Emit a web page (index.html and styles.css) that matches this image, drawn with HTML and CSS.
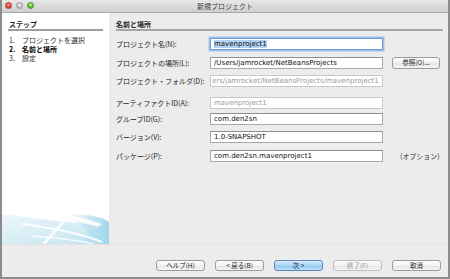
FILE: index.html
```html
<!DOCTYPE html>
<html lang="ja">
<head>
<meta charset="utf-8">
<title>新規プロジェクト</title>
<link rel="stylesheet" href="styles.css">
</head>
<body>
<div class="window">
  <div class="titlebar">
    <div class="lights">
      <span class="light red"></span>
      <span class="light yellow"></span>
      <span class="light green"></span>
    </div>
    <div class="title">新規プロジェクト</div>
  </div>
  <div class="main">
    <div class="steps">
      <div class="steps-head">ステップ</div>
      <ol class="step-list">
        <li><span class="num">1.</span><span>プロジェクトを選択</span></li>
        <li class="current"><span class="num">2.</span><span>名前と場所</span></li>
        <li><span class="num">3.</span><span>設定</span></li>
      </ol>
      <svg class="swoosh" width="107" height="50" viewBox="0 0 107 50">
        <defs>
          <linearGradient id="g1" x1="0" y1="0" x2="1" y2="0">
            <stop offset="0" stop-color="#d4ecf5" stop-opacity="0.1"/>
            <stop offset="1" stop-color="#9fd6ea"/>
          </linearGradient>
          <linearGradient id="g2" x1="0" y1="0" x2="1" y2="1">
            <stop offset="0" stop-color="#e8f5fa"/>
            <stop offset="1" stop-color="#b2ddec"/>
          </linearGradient>
        </defs>
        <path d="M0 20 C30 24 60 28 107 32 L107 50 L0 50 Z" fill="url(#g2)" opacity="0.8"/>
        <path d="M55 22 C80 18 100 22 107 28 L107 50 L75 50 C90 40 90 30 55 22 Z" fill="url(#g1)"/>
        <path d="M6 2 L100 30 L96 33 L4 6 Z" fill="#ffffff" opacity="0.85"/>
        <path d="M84 0 L86 1 L44 50 L40 50 Z" fill="#ffffff" opacity="0.85"/>
        <path d="M20 30 C50 34 80 40 100 48" stroke="#ffffff" stroke-width="2" fill="none" opacity="0.9"/>
        <path d="M30 42 C55 44 75 46 92 50" stroke="#ffffff" stroke-width="1.5" fill="none" opacity="0.9"/>
      </svg>
    </div>
    <div class="content">
      <div class="content-head">名前と場所</div>
      <div class="form">
        <label class="lbl">プロジェクト名(N):</label>
        <div class="field focus"><span class="sel">mavenproject1</span></div>
        <div></div>

        <label class="lbl">プロジェクトの場所(L):</label>
        <div class="field">/Users/jamrocket/NetBeansProjects</div>
        <button class="btn browse">参照(O)...</button>

        <label class="lbl">プロジェクト・フォルダ(D):</label>
        <div class="field disabled clip"><span>ers/jamrocket/NetBeansProjects/mavenproject1</span></div>
        <div></div>

        <label class="lbl gap">アーティファクトID(A):</label>
        <div class="field disabled gap">mavenproject1</div>
        <div class="gap"></div>

        <label class="lbl">グループID(G):</label>
        <div class="field">com.den2sn</div>
        <div></div>

        <label class="lbl">バージョン(V):</label>
        <div class="field">1.0-SNAPSHOT</div>
        <div></div>

        <label class="lbl">パッケージ(P):</label>
        <div class="field">com.den2sn.mavenproject1</div>
        <div class="note">(オプション)</div>
      </div>
    </div>
  </div>
  <div class="footer">
    <button class="btn">ヘルプ(H)</button>
    <button class="btn">&lt; 戻る(B)</button>
    <button class="btn primary">次 &gt;</button>
    <button class="btn inactive">終了(F)</button>
    <button class="btn">取消</button>
  </div>
</div>
</body>
</html>
```

FILE: styles.css
```css
html, body {
  margin: 0;
  padding: 0;
  background: #ececec;
}
body {
  font-family: "Noto Sans CJK JP", "Noto Sans", sans-serif;
  font-size: 7px;
  color: #222;
}
.window {
  width: 450px;
  height: 279px;
  box-sizing: border-box;
  border-left: 2px solid #8c8c8c;
  border-right: 2px solid #8c8c8c;
  border-bottom: 2px solid #8c8c8c;
  background: #ececec;
  display: flex;
  flex-direction: column;
}
.titlebar {
  height: 12px;
  flex: none;
  position: relative;
  background: linear-gradient(#e8e8e8, #cfcfcf);
  border-bottom: 1px solid #a8a8a8;
  display: flex;
  align-items: center;
  justify-content: center;
}
.lights {
  position: absolute;
  left: 3px;
  top: 2px;
  display: flex;
  gap: 4px;
}
.light {
  width: 7px;
  height: 7px;
  border-radius: 50%;
  box-sizing: border-box;
}
.red { background: radial-gradient(circle at 50% 35%, #ff9a8a, #d8372b 70%); border: 1px solid #b23a30; }
.yellow { background: radial-gradient(circle at 50% 35%, #f4f4f4, #b9b9b9 70%); border: 1px solid #9a9a9a; }
.green { background: radial-gradient(circle at 50% 35%, #bff19d, #4fb52c 70%); border: 1px solid #3c8f25; }
.title {
  font-size: 7px;
  color: #3a3a3a;
  line-height: 12px;
}
.main {
  flex: none;
  height: 231px;
  display: flex;
}
.steps {
  width: 107px;
  flex: none;
  background: #fff;
  display: flex;
  flex-direction: column;
  box-sizing: border-box;
  padding-top: 6px;
}
.steps-head {
  margin: 0 6px 0 6px;
  font-weight: bold;
  line-height: 10px;
  padding-left: 1px;
  border-bottom: 2px solid #9e9e9e;
}
.step-list {
  list-style: none;
  margin: 5px 0 0 0;
  padding: 0 0 0 7px;
}
.step-list li {
  display: flex;
  line-height: 9px;
  height: 9px;
  color: #333;
}
.step-list .num {
  width: 13px;
}
.step-list li.current {
  font-weight: bold;
  color: #000;
}
.swoosh {
  margin-top: auto;
  display: block;
}
.content {
  flex: 1;
  padding: 6px 5px 0 7px;
}
.content-head {
  font-weight: bold;
  line-height: 10px;
  border-bottom: 2px solid #a5a5a5;
}
.form {
  display: grid;
  grid-template-columns: 94px 173px 1fr;
  grid-auto-rows: 12px;
  row-gap: 6.7px;
  margin-top: 7px;
  align-items: center;
}
.lbl {
  color: #222;
  white-space: nowrap;
  line-height: 12px;
}
.gap {
  margin-top: 6px;
}
.field {
  height: 12px;
  box-sizing: border-box;
  background: #fff;
  border: 1px solid #a9a9a9;
  border-top-color: #8f8f8f;
  font-family: "DejaVu Sans", "Liberation Sans", sans-serif;
  font-size: 7px;
  line-height: 10px;
  padding: 0 3px;
  color: #111;
  white-space: nowrap;
  overflow: hidden;
}
.field.focus {
  border-color: #6e9dd6;
  box-shadow: 0 0 0 1.5px #9fc2ea;
}
.sel {
  background: #b4d2f3;
}
.field.disabled {
  color: #9b9b9b;
  border-color: #c8c8c8;
}
.field.clip {
  padding-left: 1px;
}
.btn {
  font-family: "Noto Sans CJK JP", sans-serif;
  font-size: 6.5px;
  height: 11px;
  width: 48px;
  padding: 0;
  box-sizing: border-box;
  border: 1px solid #9a9a9a;
  border-radius: 3px;
  background: linear-gradient(#ffffff, #f1f1f1 50%, #e4e4e4 51%, #f6f6f6);
  color: #222;
  line-height: 9px;
}
.browse {
  margin-left: 9px;
  height: 12px;
}
.note {
  margin-left: 17px;
  color: #333;
}
.footer {
  flex: 1;
  border-top: 1px solid #e2e2e2;
  display: flex;
  justify-content: flex-end;
  align-items: flex-start;
  gap: 10px;
  padding: 15px 7px 0 0;
}
.footer .btn {
  width: 49px;
}
.btn.primary {
  background: linear-gradient(#d6ecfb, #a7d3f6 50%, #8cc4f1 51%, #bde3fb);
  border-color: #5a86b8;
}
.btn.inactive {
  color: #9a9a9a;
  border-color: #bdbdbd;
}
```
